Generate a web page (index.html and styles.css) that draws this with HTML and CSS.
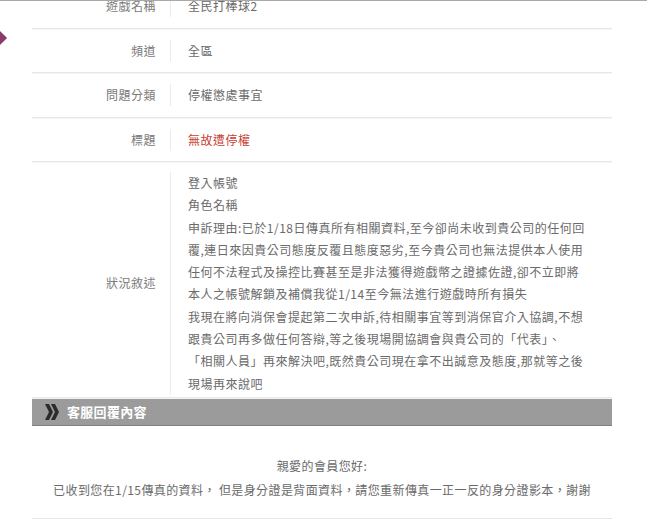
FILE: index.html
```html
<!DOCTYPE html>
<html>
<head>
<meta charset="utf-8">
<link rel="stylesheet" href="styles.css">
</head>
<body>
<div class="topline"></div>
<div class="viewport">
  <span class="marker"></span>
  <div class="sheet">
    <div class="row">
      <div class="label">遊戲名稱</div>
      <div class="value">全民打棒球2</div>
    </div>
    <div class="row">
      <div class="label">頻道</div>
      <div class="value">全區</div>
    </div>
    <div class="row">
      <div class="label">問題分類</div>
      <div class="value">停權懲處事宜</div>
    </div>
    <div class="row">
      <div class="label">標題</div>
      <div class="value red">無故遭停權</div>
    </div>
    <div class="row desc">
      <div class="label">狀況敘述</div>
      <div class="value">登入帳號<br>角色名稱<br>申訴理由:已於1/18日傳真所有相關資料,至今卻尚未收到貴公司的任何回<br>覆,連日來因貴公司態度反覆且態度惡劣,至今貴公司也無法提供本人使用<br>任何不法程式及操控比賽甚至是非法獲得遊戲幣之證據佐證,卻不立即將<br>本人之帳號解鎖及補償我從1/14至今無法進行遊戲時所有損失<br>我現在將向消保會提起第二次申訴,待相關事宜等到消保官介入協調,不想<br>跟貴公司再多做任何答辯,等之後現場開協調會與貴公司的「代表」、<br>「相關人員」再來解決吧,既然貴公司現在拿不出誠意及態度,那就等之後<br>現場再來說吧</div>
    </div>
    <div class="bar">
      <svg class="chev" width="16" height="18" viewBox="0 0 16 18">
        <path d="M1 1 L5 1 L9 9 L5 17 L1 17 L5 9 Z" fill="#2b2b2b"/>
        <path d="M7 1 L11 1 L15 9 L11 17 L7 17 L11 9 Z" fill="#2b2b2b"/>
      </svg>
      <span class="bar-title">客服回覆內容</span>
    </div>
    <div class="reply">
      <p>親愛的會員您好:</p>
      <p>已收到您在1/15傳真的資料， 但是身分證是背面資料，請您重新傳真一正一反的身分證影本，謝謝</p>
    </div>
  </div>
</div>
</body>
</html>
```

FILE: styles.css
```css
html, body {
  margin: 0;
  padding: 0;
  background: #fff;
}
body {
  font-family: "Noto Sans CJK TC", "Noto Sans", sans-serif;
  font-size: 12px;
  color: #777;
  overflow: hidden;
}
.topline {
  height: 1px;
  background: #a9a9a9;
}
.viewport {
  position: relative;
  height: 519px;
  overflow: hidden;
}
.marker {
  position: absolute;
  left: -5px;
  top: 32px;
  width: 10px;
  height: 10px;
  background: #8a3c66;
  transform: rotate(45deg);
}
.sheet {
  margin: -17px 0 0 32px;
  width: 580px;
}
.row {
  display: grid;
  grid-template-columns: 138px 1fr;
  align-items: center;
  padding: 11px 0 10.5px;
  border-bottom: 1px solid #e8e8e8;
  box-shadow: 0 1px 0 #f5f5f5;
  letter-spacing: 0.5px;
}
.label {
  text-align: right;
  padding-right: 14px;
  line-height: 22px;
  color: #7a7a7a;
}
.value {
  border-left: 1px solid #ececec;
  padding-left: 17px;
  line-height: 22px;
  color: #6a6a6a;
}
.red {
  color: #c8402f;
}
.desc {
  padding: 10px 0 2px;
}
.desc .value {
  line-height: 22.3px;
}
.bar {
  margin-top: 1px;
  height: 26px;
  background: #9b9b9b;
  border-bottom: 1px solid #808080;
  display: flex;
  align-items: center;
  padding-left: 12px;
  gap: 7px;
}
.chev {
  display: block;
}
.bar-title {
  color: #fff;
  font-size: 13px;
  font-weight: bold;
  letter-spacing: 0.3px;
}
.reply {
  padding: 28px 0 16px;
  text-align: center;
  border-bottom: 1px solid #e6e6e6;
  color: #6a6a6a;
  letter-spacing: 0.4px;
}
.reply p {
  margin: 0;
  line-height: 24px;
}
```
